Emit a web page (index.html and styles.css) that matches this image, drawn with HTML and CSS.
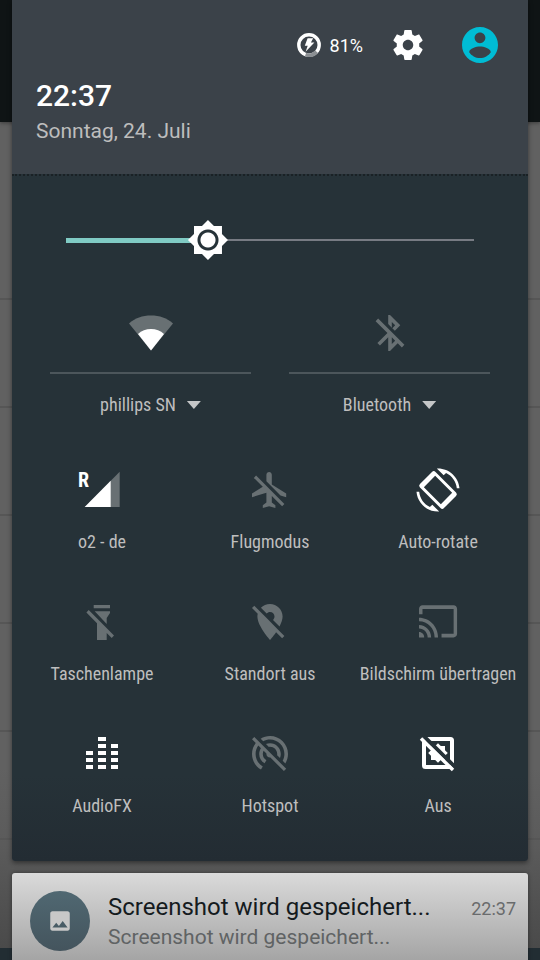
FILE: index.html
```html
<!DOCTYPE html>
<html lang="de">
<head>
<meta charset="utf-8">
<meta name="viewport" content="width=device-width, initial-scale=1">
<title>Schnelleinstellungen</title>
<link rel="stylesheet" href="styles.css">
</head>
<body>
<div class="screen">
  <div class="backdrop" aria-hidden="true">
    <div class="backdrop-bar"></div>
    <div class="backdrop-list">
      <div class="backdrop-row backdrop-row-first"></div>
      <div class="backdrop-row"></div>
      <div class="backdrop-row"></div>
      <div class="backdrop-row"></div>
      <div class="backdrop-row"></div>
      <div class="backdrop-row"></div>
    </div>
    <div class="backdrop-foot"></div>
  </div>

  <main class="shade">
    <section class="panel">
      <header class="panel-header">
        <div class="status">
          <span class="battery">
            <svg width="24" height="24" viewBox="0 0 24 24" aria-hidden="true">
              <circle cx="12" cy="12" r="10.2" fill="none" stroke="#fff" stroke-width="3.4"/>
              <path d="M8.500 21.600A10.200 10.200 0 0 0 19.600 18.800" fill="none" stroke="#8b8f93" stroke-width="3.800"/>
              <path d="M10.600 5.200h5.600l-2.300 4.400h3.500L8.600 18.800l2.100-6H7.800z" fill="#fff"/>
            </svg>
            <span>81%</span>
          </span>
          <button class="icon-button" aria-label="Einstellungen">
            <svg width="36" height="36" viewBox="0 0 24 24" fill="#fff"><path d="M19.43 12.98c.04-.32.07-.64.07-.98s-.03-.66-.07-.98l2.11-1.65c.19-.15.24-.42.12-.64l-2-3.46c-.12-.22-.39-.3-.61-.22l-2.49 1c-.52-.4-1.08-.73-1.69-.98l-.38-2.65C14.46 2.18 14.25 2 14 2h-4c-.25 0-.46.18-.49.42l-.38 2.65c-.61.25-1.17.59-1.69.98l-2.49-1c-.23-.09-.49 0-.61.22l-2 3.46c-.13.22-.07.49.12.64l2.11 1.65c-.04.32-.07.65-.07.98s.03.66.07.98l-2.11 1.65c-.19.15-.24.42-.12.64l2 3.46c.12.22.39.3.61.22l2.49-1c.52.4 1.08.73 1.69.98l.38 2.65c.03.24.24.42.49.42h4c.25 0 .46-.18.49-.42l.38-2.65c.61-.25 1.17-.59 1.69-.98l2.49 1c.23.09.49 0 .61-.22l2-3.46c.12-.22.07-.49-.12-.64l-2.11-1.65zM12 15.5c-1.93 0-3.5-1.57-3.5-3.5s1.57-3.5 3.5-3.5 3.5 1.57 3.5 3.5-1.57 3.5-3.5 3.5z"/></svg>
          </button>
          <button class="icon-button" aria-label="Nutzer">
            <svg width="36" height="36" viewBox="2 2 20 20" fill="#00bcd4"><path d="M12 2C6.48 2 2 6.48 2 12s4.48 10 10 10 10-4.48 10-10S17.52 2 12 2zm0 3c1.66 0 3 1.34 3 3s-1.34 3-3 3-3-1.34-3-3 1.34-3 3-3zm0 14.200c-2.500 0-4.710-1.280-6-3.220.030-1.990 4-3.080 6-3.080 1.990 0 5.970 1.090 6 3.080-1.290 1.940-3.500 3.220-6 3.220z"/></svg>
          </button>
        </div>
        <div class="clock">22:37</div>
        <div class="date">Sonntag, 24. Juli</div>
      </header>

      <div class="panel-body">
        <div class="brightness">
          <input class="slider" type="range" min="0" max="1000" value="348" aria-label="Helligkeit" style="--value: 0.348">
        </div>

        <div class="wide-tiles">
          <div class="wide-tile">
            <button class="wide-icon" aria-label="WLAN">
              <svg class="icon" viewBox="0 0 48 48"><path d="M24 41.500L2 14.500C8 9 15.500 6.500 24 6.500S40 9 46 14.500z" fill="#687073"/><path d="M24 41.500L11 25C14.500 21.500 19 20 24 20s9.500 1.500 13 5z" fill="#fff"/></svg>
            </button>
            <button class="wide-label">phillips SN<span class="caret"></span></button>
          </div>
          <div class="wide-tile">
            <button class="wide-icon" aria-label="Bluetooth umschalten">
              <svg class="icon off" viewBox="0 0 48 48"><path transform="translate(2.400 2.400) scale(1.800)" d="M13 5.830l1.880 1.880-1.600 1.600 1.410 1.410 3.020-3.020L12 2h-1v5.030l2 2v-3.200zM5.410 4L4 5.410 10.590 12 5 17.590 6.410 19 11 14.410V22h1l4.290-4.290 2.300 2.290L20 18.590 5.410 4zM13 18.170v-3.760l1.880 1.880L13 18.170z"/></svg>
            </button>
            <button class="wide-label">Bluetooth<span class="caret"></span></button>
          </div>
        </div>

        <div class="tiles">
          <button class="tile">
            <svg class="icon" viewBox="0 0 48 48"><path d="M6.700 41H41.700V5.700z" fill="#687073"/><path d="M6.700 41h26V14.800z" fill="#fff"/><text class="roaming" x="0" y="21">R</text></svg>
            <span>o2 - de</span>
          </button>
          <button class="tile">
            <svg class="icon off" viewBox="0 0 48 48"><path transform="translate(2.400 2.400) scale(1.800)" d="M13 9V3.500c0-.830-.670-1.500-1.500-1.500S10 2.670 10 3.500v3.680l7.830 7.830L21 16v-2l-8-5zM3 5.270l4.990 4.990L2 14v2l8-2.500V19l-2 1.500V22l3.500-1 3.500 1v-1.500L13 19v-3.730L18.730 21 20 19.730 4.270 4 3 5.270z"/></svg>
            <span>Flugmodus</span>
          </button>
          <button class="tile">
            <svg class="icon" viewBox="0 0 48 48" fill="#fff"><path transform="rotate(-45 24 24)" fill-rule="evenodd" d="M15.500 7h17a2.500 2.500 0 0 1 2.500 2.500v29a2.500 2.500 0 0 1-2.500 2.500h-17a2.500 2.500 0 0 1-2.500-2.500v-29A2.500 2.500 0 0 1 15.500 7zM16 12v24h16V12z"/><path transform="translate(2.400 2.400) scale(1.800)" d="M16.480 2.520c3.270 1.550 5.610 4.720 5.970 8.480h1.500C23.440 4.840 18.290 0 12 0l-.660.030 3.810 3.810 1.330-1.320zM7.520 21.480C4.250 19.940 1.910 16.760 1.550 13H.05C.56 19.160 5.710 24 12 24l.660-.030-3.810-3.810-1.330 1.320z"/></svg>
            <span>Auto-rotate</span>
          </button>
          <button class="tile">
            <svg class="icon off" viewBox="0 0 48 48"><path d="M15.700 7H32v3.300H15.700zM16.700 13.300H32v1.700l-3.300 5v6zM10.700 12L36 37.600l-2.300 2.300-5-5V42H19V25.200L8.400 14.400z"/></svg>
            <span>Taschenlampe</span>
          </button>
          <button class="tile">
            <svg class="icon off" viewBox="0 0 48 48"><path transform="translate(2.400 2.400) scale(1.800)" d="M12 6.500c1.380 0 2.500 1.120 2.500 2.500 0 .740-.330 1.390-.830 1.850l3.630 3.630c.980-1.860 1.700-3.800 1.700-5.480 0-3.870-3.130-7-7-7-1.980 0-3.760.830-5.040 2.150l3.190 3.190c.460-.520 1.110-.840 1.850-.840zm4.370 9.600l-4.630-4.630-.110-.110L3.270 3 2 4.270l3.180 3.180C5.070 7.950 5 8.470 5 9c0 5.250 7 13 7 13s1.670-1.850 3.380-4.350L18.730 21 20 19.730l-3.630-3.630z"/></svg>
            <span>Standort aus</span>
          </button>
          <button class="tile">
            <svg class="icon off" viewBox="0 0 48 48"><path transform="translate(3.300 2) scale(1.730 1.780)" d="M21 3H3c-1.100 0-2 .900-2 2v3h2V5h18v14h-7v2h7c1.100 0 2-.900 2-2V5c0-1.100-.900-2-2-2zM1 18v3h3c0-1.660-1.340-3-3-3zm0-4v2c2.760 0 5 2.240 5 5h2c0-3.870-3.130-7-7-7zm0-4v2c4.970 0 9 4.030 9 9h2c0-6.080-4.930-11-11-11z"/></svg>
            <span>Bildschirm übertragen</span>
          </button>
          <button class="tile">
            <svg class="icon" viewBox="0 0 48 48" fill="#fff"><path d="M8 21h7v4H8zM8 28h7v4H8zM8 35h7v4H8zM20 7h8v4h-8zM20 14h8v4h-8zM20 21h8v4h-8zM20 28h8v4h-8zM20 35h8v4h-8zM33 14h7v4h-7zM33 21h7v4h-7zM33 28h7v4h-7zM33 35h7v4h-7z"/></svg>
            <span>AudioFX</span>
          </button>
          <button class="tile">
            <svg class="icon off" viewBox="0 0 48 48"><path transform="translate(2.400 2.400) scale(1.800)" d="M17.560 14.240c.280-.690.440-1.450.440-2.240 0-3.310-2.690-6-6-6-.790 0-1.550.160-2.240.440l1.620 1.620c.200-.030.410-.060.620-.060 2.210 0 4 1.790 4 4 0 .210-.020.420-.050.630l1.610 1.610zM12 4c4.420 0 8 3.580 8 8 0 1.350-.350 2.620-.950 3.740l1.470 1.470C21.460 15.690 22 13.910 22 12c0-5.520-4.480-10-10-10-1.910 0-3.690.550-5.210 1.470l1.460 1.460C9.370 4.340 10.650 4 12 4zM3.270 2.500L2 3.770l2.100 2.100C2.790 7.570 2 9.690 2 12c0 3.700 2.010 6.920 4.990 8.650l1-1.730C5.610 17.530 4 14.960 4 12c0-1.760.570-3.380 1.530-4.690l1.430 1.440C6.360 9.680 6 10.800 6 12c0 2.220 1.210 4.150 3 5.190l1-1.740c-1.190-.700-2-1.970-2-3.450 0-.650.170-1.250.440-1.790l1.580 1.580L10 12c0 1.100.900 2 2 2l.210-.020.010.010 7.510 7.510L21 20.230 4.270 3.500l-1-1z"/></svg>
            <span>Hotspot</span>
          </button>
          <button class="tile">
            <svg class="icon" viewBox="0 0 48 48"><rect x="10" y="9" width="28" height="28" rx="1.500" fill="none" stroke="#fff" stroke-width="4"/><path d="M17 16h4.200L24 13.200 26.800 16H31v4.200l2.800 2.800-2.800 2.800V30h-4.200L24 32.800 21.200 30H17v-4.200L14.200 23l2.800-2.800z" fill="#fff"/><path d="M10 6.500L42 38" stroke="#263238" stroke-width="4"/><path d="M7 8.500L39 40" stroke="#fff" stroke-width="3.400"/></svg>
            <span>Aus</span>
          </button>
        </div>
      </div>
    </section>

    <article class="notification">
      <div class="badge">
        <svg width="26" height="26" viewBox="0 0 24 24" fill="#c8c8c8" aria-hidden="true"><path d="M21 19V5c0-1.100-.900-2-2-2H5c-1.100 0-2 .900-2 2v14c0 1.100.900 2 2 2h14c1.100 0 2-.900 2-2zM8.500 13.500l2.500 3.010L14.500 12l4.500 6H5l3.500-4.500z"/></svg>
      </div>
      <div class="notification-text">
        <div class="notification-top">
          <h2 class="notification-title">Screenshot wird gespeichert...</h2>
          <time class="notification-time">22:37</time>
        </div>
        <p class="notification-message">Screenshot wird gespeichert...</p>
      </div>
    </article>
  </main>
</div>
</body>
</html>
```
FILE: styles.css
```css
* {
  box-sizing: border-box;
}

body {
  margin: 0;
  font-family: Roboto, "Noto Sans", sans-serif;
  color: #fff;
}

button {
  margin: 0;
  padding: 0;
  border: 0;
  background: none;
  color: inherit;
  font: inherit;
}

svg {
  display: block;
}

.screen {
  position: relative;
  height: 100vh;
  overflow: hidden;
}

/* dimmed app behind the shade */
.backdrop {
  position: absolute;
  inset: 0;
  display: flex;
  flex-direction: column;
  background: linear-gradient(#616161 80%, #5b5b5b 88%, #484848);
}

.backdrop-bar {
  height: 122px;
  background: #0f1415;
  box-shadow: 0 1px 4px rgba(0, 0, 0, 0.4);
}

.backdrop-list {
  flex: 1;
}

.backdrop-row {
  height: 108px;
  border-bottom: 2px solid #565656;
}

.backdrop-row-first {
  height: 178px;
}

.backdrop-foot {
  height: 12px;
  background: #222d33;
}

.shade {
  position: relative;
  display: flex;
  flex-direction: column;
  gap: 12px;
  padding: 0 12px;
}

.panel {
  border-radius: 0 0 3px 3px;
  background: linear-gradient(#263238 90%, #232c33);
  box-shadow: 0 2px 5px rgba(0, 0, 0, 0.45);
}

.panel-header {
  padding: 27px 30px 29px 24px;
  background: #3b4249;
}

.status {
  display: flex;
  justify-content: flex-end;
  align-items: center;
  gap: 36px;
}

.battery {
  display: flex;
  align-items: center;
  gap: 9px;
  margin-right: -9px;
  font-size: 18px;
}

.clock {
  margin-top: 15px;
  font-size: 30px;
  font-weight: 500;
  line-height: 36px;
}

.date {
  margin-top: 3px;
  font-size: 21px;
  line-height: 28px;
  color: #bdbdbd;
}

.panel-body {
  padding-bottom: 43px;
  border-top: 2px dotted #1a2125;
}

.brightness {
  padding: 44px 34px 0;
}

.slider {
  --fill: calc((100% - 40px) * var(--value));
  display: block;
  width: 100%;
  height: 40px;
  margin: 0;
  appearance: none;
  background:
    linear-gradient(#80cbc4, #80cbc4) 20px 50% / var(--fill) 5px no-repeat content-box,
    linear-gradient(#777b83, #777b83) 50% 50% / calc(100% - 40px) 2px no-repeat;
}

.slider::-webkit-slider-thumb {
  width: 40px;
  height: 40px;
  appearance: none;
  background: radial-gradient(circle, #fff 7px, #263238 8px, #263238 10px, #fff 11px);
  clip-path: polygon(20px 0, 26px 6px, 34px 6px, 34px 14px, 40px 20px, 34px 26px, 34px 34px, 26px 34px, 20px 40px, 14px 34px, 6px 34px, 6px 26px, 0 20px, 6px 14px, 6px 6px, 14px 6px);
}

.wide-tiles {
  display: grid;
  grid-template-columns: 1fr 1fr;
  gap: 38px;
  margin-top: 49px;
  padding: 0 38px;
}

.wide-tile {
  display: flex;
  flex-direction: column;
}

.wide-icon {
  display: flex;
  justify-content: center;
  padding-bottom: 15px;
  border-bottom: 2px solid #4c565b;
}

.wide-label {
  display: flex;
  justify-content: center;
  align-items: center;
  gap: 11px;
  margin-top: 19px;
}

.caret {
  width: 14px;
  height: 8px;
  background: #c4c6c7;
  clip-path: polygon(0 0, 100% 0, 50% 100%);
}

.wide-label,
.tile {
  font-family: "Roboto Condensed", "Liberation Sans Narrow", Roboto, sans-serif;
  font-size: 18px;
  line-height: 24px;
  color: #bebebe;
  white-space: nowrap;
}

.tiles {
  display: grid;
  grid-template-columns: repeat(3, minmax(0, 1fr));
  row-gap: 44px;
  margin-top: 49px;
  padding: 0 6px;
}

.tile {
  display: flex;
  flex-direction: column;
  align-items: center;
  gap: 16px;
}

.icon {
  width: 48px;
  height: 48px;
}

.off {
  fill: #687073;
}

.roaming {
  fill: #fff;
  font-size: 20px;
  font-weight: 700;
}

.notification {
  display: flex;
  gap: 18px;
  padding: 18px 12px 18px 18px;
  border-radius: 3px 3px 0 0;
  background: linear-gradient(#dadada, #a4a4a4 88px);
  box-shadow: 0 0 4px rgba(0, 0, 0, 0.4);
}

.badge {
  display: flex;
  flex: none;
  justify-content: center;
  align-items: center;
  width: 60px;
  height: 60px;
  border-radius: 50%;
  background: linear-gradient(#506872, #44545d);
}

.notification-text {
  flex: 1;
  min-width: 0;
}

.notification-top {
  display: flex;
  justify-content: space-between;
  align-items: baseline;
}

.notification-title {
  margin: 0;
  font-size: 24px;
  font-weight: 400;
  line-height: 32px;
  color: #151b1e;
}

.notification-time {
  font-size: 18px;
  color: #696b6c;
}

.notification-message {
  margin: 0;
  font-size: 21px;
  line-height: 28px;
  color: #606364;
}
```
